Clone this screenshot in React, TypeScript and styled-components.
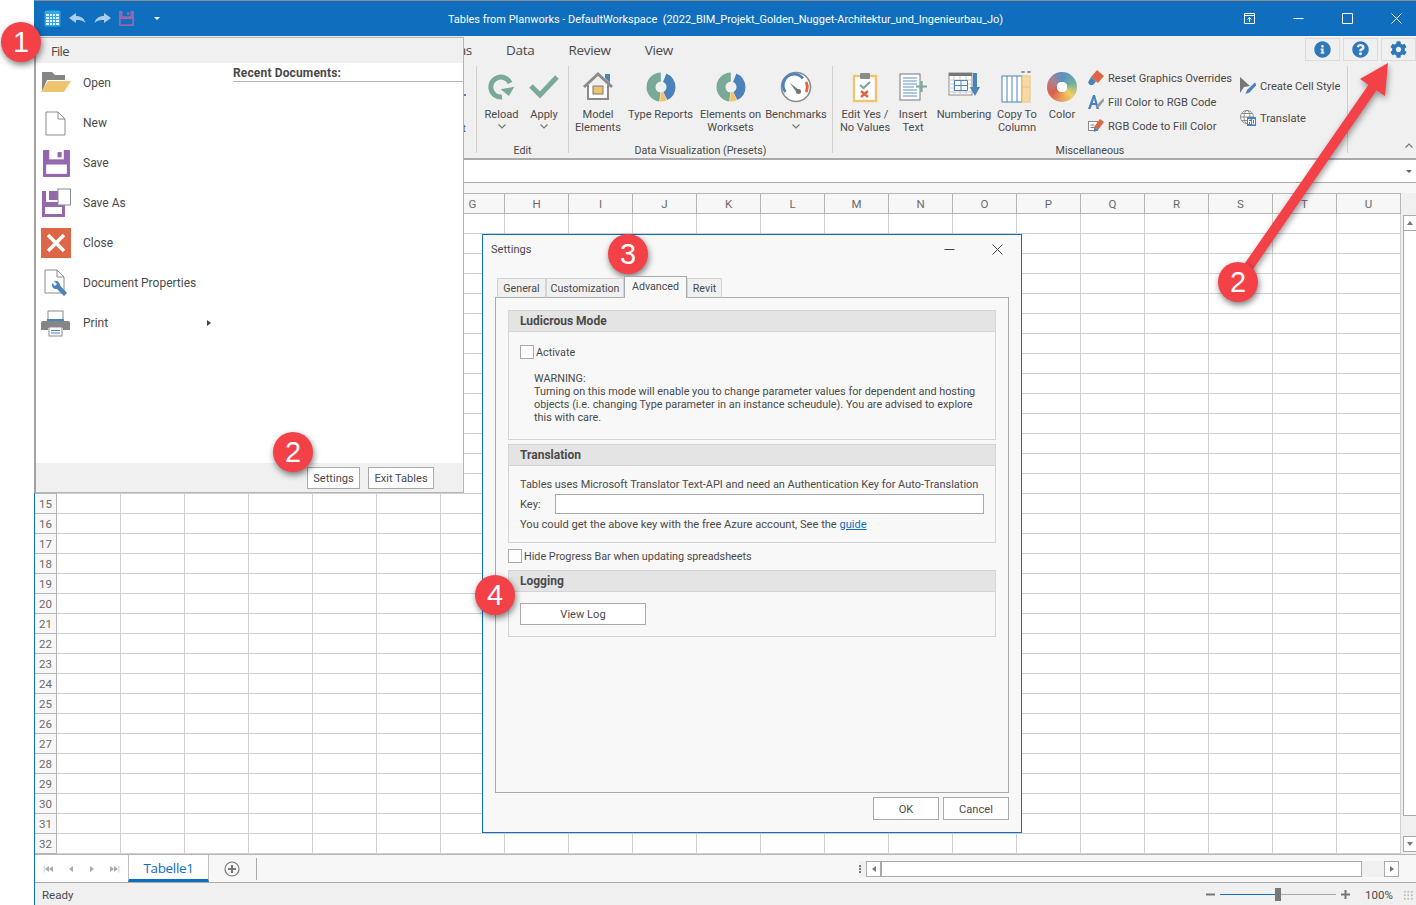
import React from "react";
import styled, { createGlobalStyle } from "styled-components";
import { FaCog, FaInfoCircle, FaQuestionCircle } from "react-icons/fa";

const BLUE = "#106ebe";
const PURPLE = "#9467ae";
const TEAL = "#7aa998";

const GlobalStyle = createGlobalStyle`
  html, body {
    margin: 0;
    padding: 0;
    width: 1416px;
    height: 905px;
    overflow: hidden;
    background: #fff;
    font-family: Roboto, "Liberation Sans", sans-serif;
    font-size: 11.100px;
    color: #4a4a4a;
  }
  * { box-sizing: border-box; }
`;

/* ---------- icons ---------- */

const GridLogo = () => (
  <svg width="17" height="17" viewBox="0 0 17 17">
    <rect x="0.500" y="0.500" width="16" height="16" rx="1.500" fill="#2aa9ee" />
    <rect x="2" y="4" width="13" height="11" fill="#e8f6ff" />
    <path d="M2 6.500h13M2 9.500h13M2 12.500h13M5.500 4v11M8.500 4v11M11.500 4v11" stroke="#2aa9ee" />
  </svg>
);

const UndoArrow = ({ flip }: { flip?: boolean }) => (
  <svg width="17" height="11" viewBox="0 0 17 11" style={flip ? { transform: "scaleX(-1)" } : undefined}>
    <path d="M0 5 L7 0 V3 C12 3 15 5 16.500 10 C14 7.500 11 7 7 7 V10 Z" fill="#a9cdee" />
  </svg>
);

const Floppy = ({ size = 30, color = PURPLE, paper = "#fff" }: { size?: number; color?: string; paper?: string }) => (
  <svg width={size} height={size} viewBox="0 0 26 26">
    <path d="M1 0 H25 a1 1 0 0 1 1 1 V25 a1 1 0 0 1 -1 1 H1 a1 1 0 0 1 -1 -1 V1 a1 1 0 0 1 1 -1Z" fill={color} />
    <rect x="3" y="14" width="20" height="9" fill={paper} />
    <rect x="6" y="0" width="14" height="9" fill={paper} />
    <rect x="14" y="2" width="4" height="5" fill={color} />
  </svg>
);

const FolderIcon = () => (
  <svg width="30" height="22" viewBox="0 0 30 22">
    <path d="M1 0 H11 L14 3 H24 V8 H6 L1 20 Z" fill="#858585" />
    <path d="M0 20 L7 9 H30 L23 20 Z" fill="#efc471" />
  </svg>
);

const PageIcon = () => (
  <svg width="22" height="25" viewBox="0 0 22 25">
    <path d="M1 1 H13 L20 8 V24 H1 Z M13 1 V8 H20" fill="#fff" stroke="#8b8b8b" />
  </svg>
);

const SaveAsIcon = () => (
  <svg width="30" height="30" viewBox="0 0 30 30">
    <path d="M1 3 H17 V12 H8 V3 H5 V14 H17 V15 H24 V29 H1 Z" fill={PURPLE} />
    <rect x="4" y="19" width="17" height="7" fill="#fff" />
    <rect x="17" y="1" width="12.500" height="16" fill="#fff" stroke="#8b8b8b" />
    <rect x="5" y="3" width="3" height="11" fill="#fff" />
  </svg>
);

const CloseSquare = () => (
  <svg width="30" height="30" viewBox="0 0 30 30">
    <rect width="30" height="30" fill="#dc6645" />
    <path d="M7 7 L23 23 M23 7 L7 23" stroke="#fff" strokeWidth="3.600" />
  </svg>
);

const PropertiesIcon = () => (
  <svg width="24" height="28" viewBox="0 0 24 28">
    <path d="M1 1 H13 L20 8 V24 H1 Z M13 1 V8 H20" fill="#fff" stroke="#8b8b8b" />
    <path d="M10 12 a4.500 4.500 0 0 1 6 4.500 L23 24 L20 27 L13 20 a4.500 4.500 0 0 1 -5 -6 L11 17 L13 15 Z" fill="#4a82b9" />
  </svg>
);

const PrinterIcon = () => (
  <svg width="30" height="27" viewBox="0 0 30 27">
    <rect x="7" y="1" width="15" height="10" fill="#fff" stroke="#8b8b8b" />
    <rect x="6" y="9" width="17" height="2" fill="#4a82b9" />
    <path d="M2 11 H27 a2 2 0 0 1 2 2 V20 H22 V18 H7 V20 H0 V13 a2 2 0 0 1 2 -2Z" fill="#858585" />
    <rect x="8" y="17" width="13" height="9" fill="#fff" stroke="#8b8b8b" />
    <path d="M10 20.500h9M10 23h9" stroke="#4a82b9" />
  </svg>
);

const ReloadIcon = () => (
  <svg width="32" height="32" viewBox="0 0 32 32">
    <path d="M24 12 A10 10 0 1 0 16 26" fill="none" stroke={TEAL} strokeWidth="5" />
    <path d="M15 17 H29 L22 25 Z" fill={TEAL} transform="rotate(-10 22 20)" />
  </svg>
);

const CheckIcon = () => (
  <svg width="32" height="32" viewBox="0 0 32 32">
    <path d="M3 15 L12 24 L29 6" fill="none" stroke={TEAL} strokeWidth="5" />
  </svg>
);

const HouseIcon = () => (
  <svg width="32" height="32" viewBox="0 0 32 32">
    <path d="M23 3 h5 v9 l-5 -5 Z" fill="#4a82b9" />
    <path d="M6 14 V28 H26 V14" fill="#fff" stroke="#8b8b8b" strokeWidth="2" />
    <path d="M2 16 L16 3 L30 16" fill="none" stroke="#8b8b8b" strokeWidth="3" />
    <rect x="11" y="15" width="10" height="8" fill="#efc471" stroke="#777" />
  </svg>
);

const DonutIcon = () => (
  <svg width="32" height="32" viewBox="0 0 32 32">
    <g transform="rotate(-90 16 16)" fill="none" strokeWidth="9">
      <circle cx="16" cy="16" r="10" pathLength={360} stroke={TEAL} strokeDasharray="172 188" strokeDashoffset={-187} />
      <circle cx="16" cy="16" r="10" pathLength={360} stroke="#4a82b9" strokeDasharray="132 228" strokeDashoffset={-22} />
      <circle cx="16" cy="16" r="10" pathLength={360} stroke="#efc471" strokeDasharray="28 332" strokeDashoffset={-156} />
    </g>
  </svg>
);

const GaugeIcon = () => (
  <svg width="32" height="32" viewBox="0 0 32 32">
    <circle cx="16" cy="16" r="14.500" fill="#fff" stroke="#8b8b8b" strokeWidth="1.600" />
    <path d="M5.500 21 A11 11 0 0 1 23 7.500" fill="none" stroke="#4a82b9" strokeWidth="2.600" />
    <path d="M26 11 A11 11 0 0 1 26 21" fill="none" stroke="#dc6645" strokeWidth="2.800" />
    <path d="M10 12 L19 19 L17 22 Z" fill="#777" />
    <circle cx="18.500" cy="20.500" r="2.500" fill="#777" />
  </svg>
);

const ClipboardIcon = () => (
  <svg width="28" height="32" viewBox="0 0 28 32">
    <rect x="3" y="5" width="22" height="25" fill="#fff" stroke="#efc471" strokeWidth="2.400" />
    <rect x="9" y="2" width="10" height="6" rx="1" fill="#8b8b8b" />
    <path d="M9 14 L12.500 17 L19 11" fill="none" stroke={TEAL} strokeWidth="2.200" />
    <path d="M10 20 L17 26 M17 20 L10 26" stroke="#dc6645" strokeWidth="2.400" />
  </svg>
);

const InsertTextIcon = () => (
  <svg width="32" height="32" viewBox="0 0 32 32">
    <rect x="3" y="3" width="20" height="26" fill="#fff" stroke="#777" />
    <path d="M6 7h14M6 10h14M6 13h14M6 16h11M6 19h14M6 22h14M6 25h14" stroke="#5d8fc0" />
    <path d="M19 15.500h11M24.500 10v11" stroke={TEAL} strokeWidth="2.200" />
  </svg>
);

const NumberingIcon = () => (
  <svg width="32" height="32" viewBox="0 0 32 32">
    <rect x="1" y="2" width="23" height="22" fill="#fff" stroke="#8b8b8b" />
    <rect x="1" y="2" width="23" height="3" fill="#777" />
    <path d="M1 9h23M1 13h23M1 17h23M1 21h23M6 5v19M12 5v19M18 5v19" stroke="#c8c8c8" />
    <path d="M6.500 9.500h13v10h-13z M6.500 14.500h13M13 9.500v10" fill="#fff" stroke="#4a82b9" />
    <path d="M26 2h4v14h3l-5 9 -5 -9h3z" fill="#4a82b9" transform="translate(-1 0)" />
  </svg>
);

const CopyColumnIcon = () => (
  <svg width="32" height="32" viewBox="0 0 32 32">
    <path d="M20 1h4m-2 -1v2M26 1h4m-2 -1v2" stroke="#777" />
    <rect x="1" y="5" width="20" height="26" fill="#fff" stroke="#4a82b9" />
    <path d="M6 5v26M11 5v26M16 5v26" stroke="#4a82b9" />
    <rect x="21" y="5" width="8" height="26" fill="#f5d9a8" stroke="#efc471" />
    <path d="M21 16h8" stroke="#efc471" />
  </svg>
);

const ColorWheel = styled.div`
  width: 30px;
  height: 30px;
  margin: 1px;
  border-radius: 50%;
  background: radial-gradient(circle, #fff 0 5px, transparent 5.500px),
    conic-gradient(#5a90c4 0deg, #6fb0a0 70deg, #f0d060 130deg, #e8a060 180deg, #d9604a 240deg, #b08090 300deg, #5a90c4 360deg);
`;

const EraserIcon = () => (
  <svg width="16" height="16" viewBox="0 0 16 16">
    <path d="M9 0 L16 6 L10 13 L3 7 Z" fill="#dc6645" />
    <path d="M3 7 L8 11.500 L5 15 H2 L0 12.500 Z" fill="#4a82b9" />
  </svg>
);

const FillTextIcon = () => (
  <svg width="16" height="16" viewBox="0 0 16 16">
    <path d="M0 15 L5 1 H7 L11 15 H8.500 L7.500 11 H4 L2.500 15 Z M4.800 9 H7 L6 4.500 Z" fill="#4a82b9" />
    <path d="M15.500 4 L9 11 L8 14 L11 13 L16 7 Z" fill="#999" />
  </svg>
);

const RgbCodeIcon = () => (
  <svg width="16" height="14" viewBox="0 0 16 14">
    <rect x="0.500" y="2.500" width="9" height="9" fill="#fff" stroke="#8b8b8b" />
    <path d="M2.500 6h4M2.500 8.500h4" stroke="#777" />
    <path d="M12 0 L16 3 L10 11 L6 8 Z" fill="#dc6645" />
    <path d="M6 8 L10 11 L6 13 Z" fill="#4a82b9" />
  </svg>
);

const CellStyleIcon = () => (
  <svg width="16" height="18" viewBox="0 0 16 18">
    <path d="M0 0 L10 9 L4 10 L0 16 Z" fill="#777" />
    <path d="M15 5.500 L7 13 L5.500 17 L9.500 15.500 L16.500 8 Z" fill="#4a82b9" />
  </svg>
);

const GlobeIcon = () => (
  <svg width="16" height="16" viewBox="0 0 16 16">
    <circle cx="7" cy="7" r="6.500" fill="#fff" stroke="#8b8b8b" />
    <ellipse cx="7" cy="7" rx="3" ry="6.500" fill="none" stroke="#8b8b8b" />
    <path d="M0.500 7h13M1.500 3.500h11M1.500 10.500h11" stroke="#8b8b8b" />
    <rect x="7" y="7" width="9" height="9" fill="#4a82b9" />
    <path d="M8.500 14V9.500h2M8.500 11.500h2v2.500M12.500 9.500h2v4.500h-2z" fill="none" stroke="#fff" />
  </svg>
);

const Chevron = ({ up }: { up?: boolean }) => (
  <svg width="8" height="5" viewBox="0 0 8 5" style={up ? { transform: "rotate(180deg)" } : undefined}>
    <path d="M0.500 0.500 L4 4 L7.500 0.500" fill="none" stroke="#777" strokeWidth="1.200" />
  </svg>
);

/* ---------- page frame ---------- */

const Page = styled.div`
  display: flex;
  position: relative;
  width: 1416px;
  height: 905px;
  padding-left: 34px;
`;

const Shell = styled.div`
  display: flex;
  flex-direction: column;
  width: 1382px;
  height: 905px;
  border-left: 1px solid ${BLUE};
  border-top: 1px solid #8c8c8c;
  background: #f0f0f0;
`;

const TitleBar = styled.div`
  display: grid;
  grid-template-columns: 1fr auto 1fr;
  align-items: center;
  flex: none;
  height: 35px;
  background: ${BLUE};
  color: #fff;
`;

const QuickBar = styled.div`
  display: flex;
  align-items: center;
  gap: 8px;
  padding-left: 9px;
`;

const QuickCaret = styled.span`
  width: 0;
  height: 0;
  margin-left: 12px;
  border: 3px solid transparent;
  border-top: 3px solid #fff;
  border-bottom: 0;
`;

const WindowTitle = styled.div`
  padding-top: 1px;
  font-size: 10.950px;
  white-space: pre;
  color: #fff;
`;

const WindowButtons = styled.div`
  display: flex;
  align-items: center;
  justify-content: flex-end;
  gap: 38px;
  padding-right: 14px;
`;

const TitleIcon = styled.svg`
  display: block;
  width: 11px;
  height: 11px;
  stroke: #fff;
  fill: none;
`;

/* ---------- ribbon ---------- */

const Ribbon = styled.div`
  flex: none;
  height: 124px;
  border-bottom: 2px solid #aaaaaa;
  background: #f0f0f0;
`;

const TabRow = styled.div`
  display: flex;
  align-items: flex-start;
  gap: 34px;
  height: 29px;
`;

const TabSlot = styled.div`
  display: flex;
  justify-content: flex-end;
  width: 437px;
`;

const RibbonTab = styled.div`
  font-family: "Open Sans", sans-serif;
  font-size: 13.500px;
  line-height: 29px;
  letter-spacing: -0.300px;
  color: #4a4a4a;
`;

const Shortcuts = styled.div`
  display: flex;
  gap: 3px;
  margin-left: auto;
  padding-top: 2px;
`;

const Shortcut = styled.div`
  display: flex;
  align-items: center;
  justify-content: center;
  width: 35px;
  height: 23px;
  border: 1px solid #dcdcdc;
  color: #2f78b9;
  font-size: 17px;
`;

const GroupRow = styled.div`
  display: flex;
  height: 87px;
  margin-top: 1px;
`;

const Group = styled.div<{ $width: number }>`
  display: flex;
  flex-direction: column;
  flex: none;
  width: ${(p) => p.$width}px;
  height: 87px;
  border-right: 1px solid #d0d0d0;
`;

const GroupButtons = styled.div<{ $pad: number }>`
  display: flex;
  flex: 1;
  padding-left: ${(p) => p.$pad}px;
`;

const GroupLabel = styled.div`
  height: 14px;
  margin-bottom: -5px;
  font-size: 10.700px;
  line-height: 14px;
  text-align: center;
`;

const RibbonEnd = styled.div`
  display: flex;
  flex: 1;
  align-items: flex-end;
  justify-content: flex-end;
  padding: 0 3px 5px 0;
`;

const BigButton = styled.div<{ $width: number }>`
  display: flex;
  flex-direction: column;
  align-items: center;
  flex: none;
  width: ${(p) => p.$width}px;
  padding-top: 5px;
  line-height: 13px;
  text-align: center;
  white-space: pre;
`;

const BigIcon = styled.div`
  display: flex;
  align-items: center;
  justify-content: center;
  height: 32px;
  margin-bottom: 5px;
`;

const Caret = styled.div`
  display: flex;
  justify-content: center;
  height: 13px;
  padding-top: 3px;
`;

const SmallColumn = styled.div<{ $gap: number; $top: number; $left: number }>`
  display: flex;
  flex-direction: column;
  flex: none;
  gap: ${(p) => p.$gap}px;
  margin-left: ${(p) => p.$left}px;
  padding-top: ${(p) => p.$top}px;
`;

const SmallButton = styled.div`
  display: flex;
  align-items: center;
  gap: 4px;
  height: 24px;
  white-space: nowrap;
`;

const SmallIcon = styled.div`
  display: flex;
  align-items: center;
  justify-content: center;
  width: 16px;
`;

const LeadStub = styled.div`
  display: flex;
  flex-direction: column;
  align-items: flex-end;
  padding-right: 10px;
  padding-top: 28px;
  line-height: 13px;
`;

const StubDot = styled.span`
  width: 3px;
  height: 2px;
  margin-bottom: 26px;
  background: #4a82b9;
`;

type BigProps = { width: number; label: string; caret?: boolean; children: React.ReactNode };

const Big = ({ width, label, caret, children }: BigProps) => (
  <BigButton $width={width}>
    <BigIcon>{children}</BigIcon>
    {label}
    {caret && (
      <Caret>
        <Chevron />
      </Caret>
    )}
  </BigButton>
);

/* ---------- formula bar and grid ---------- */

const FormulaBar = styled.div`
  display: flex;
  align-items: center;
  justify-content: flex-end;
  flex: none;
  height: 23px;
  padding-right: 4px;
  background: #fff;
  border-bottom: 1px solid #aaaaaa;
`;

const DownCaret = styled.span`
  width: 0;
  height: 0;
  border: 3.500px solid transparent;
  border-top: 3.500px solid #666;
  border-bottom: 0;
`;

const Strip = styled.div`
  flex: none;
  height: 10px;
  background: #f7f7f7;
`;

const SheetArea = styled.div`
  display: flex;
  flex: none;
  height: 661px;
`;

const SheetGrid = styled.div`
  display: grid;
  grid-template-columns: 22px repeat(21, 64px);
  grid-template-rows: 21px repeat(32, 20px);
  flex: none;
  background: #fff;
`;

const Corner = styled.div`
  background: #f7f7f7;
  border-top: 1px solid #b5b5b5;
  border-bottom: 1px solid #b5b5b5;
  border-right: 1px solid #b5b5b5;
`;

const ColHead = styled(Corner)`
  display: flex;
  align-items: center;
  justify-content: center;
  font-size: 11.500px;
  color: #6a6a6a;
`;

const RowHead = styled.div`
  display: flex;
  align-items: center;
  justify-content: center;
  background: #f7f7f7;
  border-right: 1px solid #b5b5b5;
  border-bottom: 1px solid #b5b5b5;
  font-size: 11.500px;
  color: #6a6a6a;
`;

const Cell = styled.div`
  border-right: 1px solid #d0d0d0;
  border-bottom: 1px solid #d0d0d0;
`;

const VScroll = styled.div`
  display: flex;
  flex-direction: column;
  flex: 1;
  padding: 22px 0 2px 2px;
  background: #f0f0f0;
`;

const ScrollButton = styled.div`
  display: flex;
  align-items: center;
  justify-content: center;
  flex: none;
  width: 14px;
  height: 16px;
  background: #fff;
  border: 1px solid #aaaaaa;
`;

const VThumb = styled.div`
  flex: none;
  width: 14px;
  height: 586px;
  margin-bottom: 20px;
  margin-top: -1px;
  background: #fff;
  border: 1px solid #aaaaaa;
`;

const Tri = styled.span<{ $dir: "up" | "down" | "left" | "right"; $color?: string }>`
  display: block;
  flex: none;
  width: 0;
  height: 0;
  border: 3px solid transparent;
  ${(p) => {
    const c = p.$color ?? "#777";
    if (p.$dir === "up") return `border-top: 0; border-bottom: 4px solid ${c};`;
    if (p.$dir === "down") return `border-bottom: 0; border-top: 4px solid ${c};`;
    if (p.$dir === "left") return `border-left: 0; border-right: 4px solid ${c};`;
    return `border-right: 0; border-left: 4px solid ${c};`;
  }}
`;

/* ---------- sheet tabs and status ---------- */

const TabBar = styled.div`
  display: flex;
  align-items: stretch;
  flex: none;
  height: 29px;
  background: #f7f7f7;
  border-top: 1px solid #b5b5b5;
  border-bottom: 1px solid #aaaaaa;
`;

const SheetNav = styled.div`
  display: flex;
  align-items: center;
  justify-content: space-around;
  width: 93px;
  background: #fff;
  color: #aaa;
  font-size: 7px;
`;

const NavGlyph = styled.span`
  display: flex;
  align-items: center;
`;

const SheetTab = styled.div`
  width: 81px;
  height: 27px;
  padding-top: 1px;
  background: #fff;
  border-left: 1px solid #c0c0c0;
  border-right: 1px solid #c0c0c0;
  border-bottom: 3px solid ${BLUE};
  font-family: "Open Sans", sans-serif;
  font-size: 13.500px;
  line-height: 25px;
  letter-spacing: -0.350px;
  text-align: center;
  color: ${BLUE};
`;

const AddSheet = styled.div`
  display: flex;
  align-items: center;
  width: 47px;
  height: 27px;
  padding-left: 15px;
`;

const TabDivider = styled.div`
  width: 1px;
  height: 22px;
  margin-top: 3px;
  background: #aaaaaa;
`;

const HScroll = styled.div`
  display: flex;
  align-items: center;
  height: 16px;
  margin: 6px 17px 0 auto;
  background: #f0f0f0;
`;

const GripDots = styled.div`
  width: 2px;
  height: 8px;
  margin-right: 5px;
  background: repeating-linear-gradient(#777 0 2px, transparent 2px 3px);
`;

const HButton = styled.div`
  display: flex;
  align-items: center;
  justify-content: center;
  width: 15px;
  height: 16px;
  background: #fff;
  border: 1px solid #aaaaaa;
`;

const HThumb = styled.div`
  width: 481px;
  height: 16px;
  margin-right: 22px;
  background: #fff;
  border: 1px solid #aaaaaa;
`;

const StatusBar = styled.div`
  display: flex;
  align-items: center;
  flex: 1;
  padding: 1px 0 0 7px;
  background: #f0f0f0;
  font-size: 11.500px;
`;

const ZoomArea = styled.div`
  display: flex;
  align-items: center;
  margin-left: auto;
  padding-right: 3px;
`;

const ZoomTrack = styled.div`
  position: relative;
  width: 116px;
  height: 1px;
  margin: 0 5px;
  background: linear-gradient(to right, ${BLUE} 0 50%, #aaaaaa 50% 100%);
`;

const ZoomThumb = styled.div`
  position: absolute;
  left: 55px;
  top: -6px;
  width: 6px;
  height: 13px;
  background: #777;
`;

const ZoomSign = styled.svg`
  width: 9px;
  height: 9px;
  stroke: #777;
  stroke-width: 2;
`;

const ZoomValue = styled.div`
  margin-left: 15px;
  width: 28px;
  white-space: nowrap;
`;

const ResizeGrip = styled.div`
  width: 10px;
  height: 10px;
  margin-left: 10px;
  background-image: radial-gradient(circle, #bbb 1px, transparent 1.200px);
  background-size: 3.500px 3.500px;
`;

/* ---------- file menu ---------- */

const FileMenu = styled.div`
  position: absolute;
  left: 34px;
  top: 37px;
  display: flex;
  flex-direction: column;
  width: 430px;
  height: 456px;
  background: #fff;
  border-left: 2px solid #a3a3a3;
  border-right: 1px solid #b5b5b5;
  border-bottom: 1px solid #b5b5b5;
  border-top: 1px solid #b5b5b5;
`;

const MenuHead = styled.div`
  flex: none;
  height: 25px;
  padding-left: 15px;
  background: #f0f0f0;
  font-family: "Open Sans", sans-serif;
  font-size: 13px;
  line-height: 26px;
  letter-spacing: -0.700px;
`;

const MenuBody = styled.div`
  display: flex;
  flex: 1;
`;

const MenuList = styled.div`
  flex: none;
  width: 197px;
`;

const MenuItem = styled.div`
  position: relative;
  display: flex;
  align-items: center;
  height: 40px;
  font-size: 12px;
`;

const MenuIcon = styled.div`
  display: flex;
  align-items: center;
  justify-content: center;
  flex: none;
  width: 40px;
  margin-right: 7px;
`;

const MenuArrow = styled.div`
  position: absolute;
  left: 171px;
  top: 17px;
`;

const Recent = styled.div`
  flex: 1;
  height: 19px;
  border-bottom: 1px solid #b5b5b5;
  font-weight: 700;
  font-size: 12px;
  letter-spacing: 0.150px;
  line-height: 20px;
`;

const MenuFoot = styled.div`
  display: flex;
  align-items: center;
  justify-content: flex-end;
  flex: none;
  gap: 8px;
  height: 29px;
  padding-right: 29px;
  background: #f0f0f0;

  & > div {
    padding-top: 1px;
  }
`;

const PlainButton = styled.div<{ $width: number; $height: number }>`
  display: flex;
  align-items: center;
  justify-content: center;
  flex: none;
  width: ${(p) => p.$width}px;
  height: ${(p) => p.$height}px;
  background: #fff;
  border: 1px solid #aaaaaa;
`;

/* ---------- settings dialog ---------- */

const Dialog = styled.div`
  position: absolute;
  left: 482px;
  top: 234px;
  display: flex;
  flex-direction: column;
  width: 540px;
  height: 599px;
  background: #f8f8f8;
  border: 1px solid ${BLUE};
`;

const DialogTitle = styled.div`
  display: flex;
  align-items: flex-start;
  justify-content: space-between;
  flex: none;
  height: 41px;
  padding: 8px 18px 0 8px;
`;

const DialogControls = styled.div`
  display: flex;
  align-items: center;
  gap: 37px;
  padding-top: 1px;
`;

const DialogIcon = styled.svg`
  display: block;
  width: 11px;
  height: 11px;
  stroke: #444;
  fill: none;
`;

const DialogTabs = styled.div`
  display: flex;
  align-items: flex-end;
  flex: none;
  height: 22px;
  padding-left: 14px;
  margin-bottom: -1px;
  position: relative;
  z-index: 1;
`;

const DialogTab = styled.div<{ $active?: boolean; $width: number }>`
  display: flex;
  align-items: center;
  justify-content: center;
  flex: none;
  width: ${(p) => p.$width}px;
  height: ${(p) => (p.$active ? 22 : 20)}px;
  padding-bottom: ${(p) => (p.$active ? 2 : 0)}px;
  background: ${(p) => (p.$active ? "#f8f8f8" : "#f0f0f0")};
  border: 1px solid ${(p) => (p.$active ? "#aaaaaa" : "#d4d4d4")};
  border-bottom: ${(p) => (p.$active ? "0" : "1px solid #aaaaaa")};
  font-size: 10.700px;
  white-space: nowrap;
`;

const DialogPanel = styled.div`
  display: flex;
  flex-direction: column;
  flex: none;
  height: 496px;
  margin: 0 12px;
  padding: 12px 12px 0;
  border: 1px solid #aaaaaa;
`;

const Box = styled.div<{ $height: number; $gap?: number }>`
  flex: none;
  height: ${(p) => p.$height}px;
  margin-bottom: ${(p) => p.$gap ?? 0}px;
  border: 1px solid #d4d4d4;
`;

const BoxHead = styled.div`
  height: 21px;
  padding-left: 11px;
  background: #e4e4e4;
  border-bottom: 1px solid #d4d4d4;
  font-weight: 700;
  font-size: 12px;
  line-height: 21px;
`;

const BoxBody = styled.div<{ $top: number }>`
  padding: ${(p) => p.$top}px 11px 0;
  line-height: 13px;
`;

const CheckRow = styled.div<{ $below?: number }>`
  display: flex;
  align-items: center;
  gap: 2px;
  height: 14px;
  margin-bottom: ${(p) => p.$below ?? 0}px;
  font-size: 10.800px;
`;

const CheckBox = styled.span`
  flex: none;
  width: 14px;
  height: 14px;
  background: #fff;
  border: 1px solid #aaaaaa;
`;

const Warning = styled.div`
  margin-left: 14px;
  font-size: 10.850px;
  line-height: 13px;
`;

const TranslationNote = styled.div`
  font-size: 10.950px;
  white-space: nowrap;
`;

const KeyRow = styled.div`
  display: flex;
  align-items: center;
  margin: 3px 0 4px;
`;

const KeyLabel = styled.span`
  flex: none;
  width: 35px;
`;

const KeyField = styled.div`
  flex: 1;
  height: 20px;
  background: #fff;
  border: 1px solid #aaaaaa;
`;

const GuideLink = styled.a`
  color: ${BLUE};
  text-decoration: underline;
`;

const DialogFoot = styled.div`
  display: flex;
  justify-content: flex-end;
  gap: 4px;
  flex: none;
  padding: 4px 12px 0 0;

  & > div {
    padding-top: 1px;
  }
`;

/* ---------- annotations ---------- */

const Badge = styled.div<{ $x: number; $y: number }>`
  position: absolute;
  left: ${(p) => p.$x - 20}px;
  top: ${(p) => p.$y - 20}px;
  display: flex;
  align-items: center;
  justify-content: center;
  width: 40px;
  height: 40px;
  border-radius: 50%;
  background: #f44047;
  box-shadow: 1px 3px 6px rgba(0, 0, 0, 0.5);
  color: #fff;
  font-family: "Liberation Sans", Arial, sans-serif;
  font-size: 29px;
`;

const ArrowLayer = styled.svg`
  position: absolute;
  left: 1220px;
  top: 50px;
  filter: drop-shadow(1px 3px 3px rgba(0, 0, 0, 0.4));
`;

const columns = "ABCDEFGHIJKLMNOPQRSTU".split("");
const rows = Array.from({ length: 32 }, (_, i) => i + 1);

const menuItems: { label: string; icon: React.ReactNode; arrow?: boolean }[] = [
  { label: "Open", icon: <FolderIcon /> },
  { label: "New", icon: <PageIcon /> },
  { label: "Save", icon: <Floppy size={27} /> },
  { label: "Save As", icon: <SaveAsIcon /> },
  { label: "Close", icon: <CloseSquare /> },
  { label: "Document Properties", icon: <PropertiesIcon /> },
  { label: "Print", icon: <PrinterIcon />, arrow: true },
];

const App = () => {
  return (
    <Page>
      <GlobalStyle />
      <Shell>
        <TitleBar>
          <QuickBar>
            <GridLogo />
            <UndoArrow />
            <UndoArrow flip />
            <Floppy size={15} paper={BLUE} />
            <QuickCaret />
          </QuickBar>
          <WindowTitle>
            {"Tables from Planworks - DefaultWorkspace  (2022_BIM_Projekt_Golden_Nugget-Architektur_und_Ingenieurbau_Jo)"}
          </WindowTitle>
          <WindowButtons>
            <TitleIcon viewBox="0 0 11 11">
              <path d="M0.500 0.500h10v10h-10z M0.500 2.500h10 M5.500 9V4.500 M3.500 6.500l2 -2 2 2" />
            </TitleIcon>
            <TitleIcon viewBox="0 0 11 11">
              <path d="M0.500 5.500h10" />
            </TitleIcon>
            <TitleIcon viewBox="0 0 11 11">
              <path d="M0.500 0.500h10v10h-10z" />
            </TitleIcon>
            <TitleIcon viewBox="0 0 11 11">
              <path d="M0.500 0.500l10 10M10.500 0.500l-10 10" />
            </TitleIcon>
          </WindowButtons>
        </TitleBar>

        <Ribbon>
          <TabRow>
            <TabSlot>
              <RibbonTab>Formulas</RibbonTab>
            </TabSlot>
            <RibbonTab>Data</RibbonTab>
            <RibbonTab>Review</RibbonTab>
            <RibbonTab>View</RibbonTab>
            <Shortcuts>
              <Shortcut>
                <FaInfoCircle />
              </Shortcut>
              <Shortcut>
                <FaQuestionCircle />
              </Shortcut>
              <Shortcut>
                <FaCog />
              </Shortcut>
            </Shortcuts>
          </TabRow>
          <GroupRow>
            <Group $width={442}>
              <LeadStub>
                <StubDot />
                Format
              </LeadStub>
            </Group>
            <Group $width={92}>
              <GroupButtons $pad={3}>
                <Big width={43} label="Reload" caret>
                  <ReloadIcon />
                </Big>
                <Big width={42} label="Apply" caret>
                  <CheckIcon />
                </Big>
              </GroupButtons>
              <GroupLabel>Edit</GroupLabel>
            </Group>
            <Group $width={264}>
              <GroupButtons $pad={5}>
                <Big width={48} label={"Model\nElements"}>
                  <HouseIcon />
                </Big>
                <Big width={77} label={"Type Reports"}>
                  <DonutIcon />
                </Big>
                <Big width={63} label={"Elements on\nWorksets"}>
                  <DonutIcon />
                </Big>
                <Big width={68} label="Benchmarks" caret>
                  <GaugeIcon />
                </Big>
              </GroupButtons>
              <GroupLabel>Data Visualization (Presets)</GroupLabel>
            </Group>
            <Group $width={515}>
              <GroupButtons $pad={7}>
                <Big width={50} label={"Edit Yes /\nNo Values"}>
                  <ClipboardIcon />
                </Big>
                <Big width={46} label={"Insert\nText"}>
                  <InsertTextIcon />
                </Big>
                <Big width={56} label="Numbering">
                  <NumberingIcon />
                </Big>
                <Big width={50} label={"Copy To\nColumn"}>
                  <CopyColumnIcon />
                </Big>
                <Big width={40} label="Color">
                  <ColorWheel />
                </Big>
                <SmallColumn $gap={0} $top={0} $left={6}>
                  <SmallButton>
                    <SmallIcon>
                      <EraserIcon />
                    </SmallIcon>
                    Reset Graphics Overrides
                  </SmallButton>
                  <SmallButton>
                    <SmallIcon>
                      <FillTextIcon />
                    </SmallIcon>
                    Fill Color to RGB Code
                  </SmallButton>
                  <SmallButton>
                    <SmallIcon>
                      <RgbCodeIcon />
                    </SmallIcon>
                    RGB Code to Fill Color
                  </SmallButton>
                </SmallColumn>
                <SmallColumn $gap={8} $top={8} $left={8}>
                  <SmallButton>
                    <SmallIcon>
                      <CellStyleIcon />
                    </SmallIcon>
                    Create Cell Style
                  </SmallButton>
                  <SmallButton>
                    <SmallIcon>
                      <GlobeIcon />
                    </SmallIcon>
                    Translate
                  </SmallButton>
                </SmallColumn>
              </GroupButtons>
              <GroupLabel>Miscellaneous</GroupLabel>
            </Group>
            <RibbonEnd>
              <Chevron up />
            </RibbonEnd>
          </GroupRow>
        </Ribbon>

        <FormulaBar>
          <DownCaret />
        </FormulaBar>
        <Strip />

        <SheetArea>
          <SheetGrid>
            <Corner />
            {columns.map((c, i) => (
              <ColHead key={c}>{i < 6 ? "" : c}</ColHead>
            ))}
            {rows.map((r) => (
              <React.Fragment key={r}>
                <RowHead>{r < 15 ? "" : r}</RowHead>
                {columns.map((c) => (
                  <Cell key={c} />
                ))}
              </React.Fragment>
            ))}
          </SheetGrid>
          <VScroll>
            <ScrollButton>
              <Tri $dir="up" />
            </ScrollButton>
            <VThumb />
            <ScrollButton>
              <Tri $dir="down" />
            </ScrollButton>
          </VScroll>
        </SheetArea>

        <TabBar>
          <SheetNav>
            <NavGlyph>
              |<Tri $dir="left" $color="#aaa" />
              <Tri $dir="left" $color="#aaa" />
            </NavGlyph>
            <Tri $dir="left" $color="#aaa" />
            <Tri $dir="right" $color="#aaa" />
            <NavGlyph>
              <Tri $dir="right" $color="#aaa" />
              <Tri $dir="right" $color="#aaa" />|
            </NavGlyph>
          </SheetNav>
          <SheetTab>Tabelle1</SheetTab>
          <AddSheet>
            <svg width="16" height="16" viewBox="0 0 16 16">
              <circle cx="8" cy="8" r="7" fill="none" stroke="#777" strokeWidth="1.200" />
              <path d="M8 4v8M4 8h8" stroke="#777" strokeWidth="2" />
            </svg>
          </AddSheet>
          <TabDivider />
          <HScroll>
            <GripDots />
            <HButton>
              <Tri $dir="left" />
            </HButton>
            <HThumb />
            <HButton>
              <Tri $dir="right" />
            </HButton>
          </HScroll>
        </TabBar>

        <StatusBar>
          Ready
          <ZoomArea>
            <ZoomSign viewBox="0 0 9 9">
              <path d="M0 4.500h9" />
            </ZoomSign>
            <ZoomTrack>
              <ZoomThumb />
            </ZoomTrack>
            <ZoomSign viewBox="0 0 9 9">
              <path d="M0 4.500h9M4.500 0v9" />
            </ZoomSign>
            <ZoomValue>100%</ZoomValue>
            <ResizeGrip />
          </ZoomArea>
        </StatusBar>
      </Shell>

      <FileMenu>
        <MenuHead>File</MenuHead>
        <MenuBody>
          <MenuList>
            {menuItems.map((item) => (
              <MenuItem key={item.label}>
                <MenuIcon>{item.icon}</MenuIcon>
                {item.label}
                {item.arrow && (
                  <MenuArrow>
                    <Tri $dir="right" $color="#444" />
                  </MenuArrow>
                )}
              </MenuItem>
            ))}
          </MenuList>
          <Recent>Recent Documents:</Recent>
        </MenuBody>
        <MenuFoot>
          <PlainButton $width={53} $height={22}>
            Settings
          </PlainButton>
          <PlainButton $width={66} $height={22}>
            Exit Tables
          </PlainButton>
        </MenuFoot>
      </FileMenu>

      <Dialog>
        <DialogTitle>
          Settings
          <DialogControls>
            <DialogIcon viewBox="0 0 11 11">
              <path d="M0.500 5.500h10" />
            </DialogIcon>
            <DialogIcon viewBox="0 0 11 11">
              <path d="M0.500 0.500l10 10M10.500 0.500l-10 10" />
            </DialogIcon>
          </DialogControls>
        </DialogTitle>
        <DialogTabs>
          <DialogTab $width={49}>General</DialogTab>
          <DialogTab $width={78}>Customization</DialogTab>
          <DialogTab $width={63} $active>
            Advanced
          </DialogTab>
          <DialogTab $width={35}>Revit</DialogTab>
        </DialogTabs>
        <DialogPanel>
          <Box $height={130} $gap={4}>
            <BoxHead>Ludicrous Mode</BoxHead>
            <BoxBody $top={13}>
              <CheckRow $below={13}>
                <CheckBox />
                Activate
              </CheckRow>
              <Warning>
                WARNING:
                <br />
                Turning on this mode will enable you to change parameter values for dependent and hosting
                objects (i.e. changing Type parameter in an instance scheudule). You are advised to explore
                this with care.
              </Warning>
            </BoxBody>
          </Box>
          <Box $height={99} $gap={6}>
            <BoxHead>Translation</BoxHead>
            <BoxBody $top={12}>
              <TranslationNote>
                Tables uses Microsoft Translator Text-API and need an Authentication Key for Auto-Translation
              </TranslationNote>
              <KeyRow>
                <KeyLabel>Key:</KeyLabel>
                <KeyField />
              </KeyRow>
              You could get the above key with the free Azure account, See the <GuideLink>guide</GuideLink>
            </BoxBody>
          </Box>
          <CheckRow $below={7}>
            <CheckBox />
            Hide Progress Bar when updating spreadsheets
          </CheckRow>
          <Box $height={67}>
            <BoxHead>Logging</BoxHead>
            <BoxBody $top={11}>
              <PlainButton $width={126} $height={22}>
                View Log
              </PlainButton>
            </BoxBody>
          </Box>
        </DialogPanel>
        <DialogFoot>
          <PlainButton $width={66} $height={23}>
            OK
          </PlainButton>
          <PlainButton $width={66} $height={23}>
            Cancel
          </PlainButton>
        </DialogFoot>
      </Dialog>

      <ArrowLayer width="190" height="250" viewBox="0 0 190 250">
        <path d="M14 229 L148.500 34.800 L140 29 L168 13 L165 46 L156.500 40.200 L22 235 Z" fill="#f44047" />
      </ArrowLayer>

      <Badge $x={21} $y={42}>1</Badge>
      <Badge $x={293} $y={452}>2</Badge>
      <Badge $x={628} $y={254}>3</Badge>
      <Badge $x={495} $y={595}>4</Badge>
      <Badge $x={1238} $y={282}>2</Badge>
    </Page>
  );
};

export default App;
